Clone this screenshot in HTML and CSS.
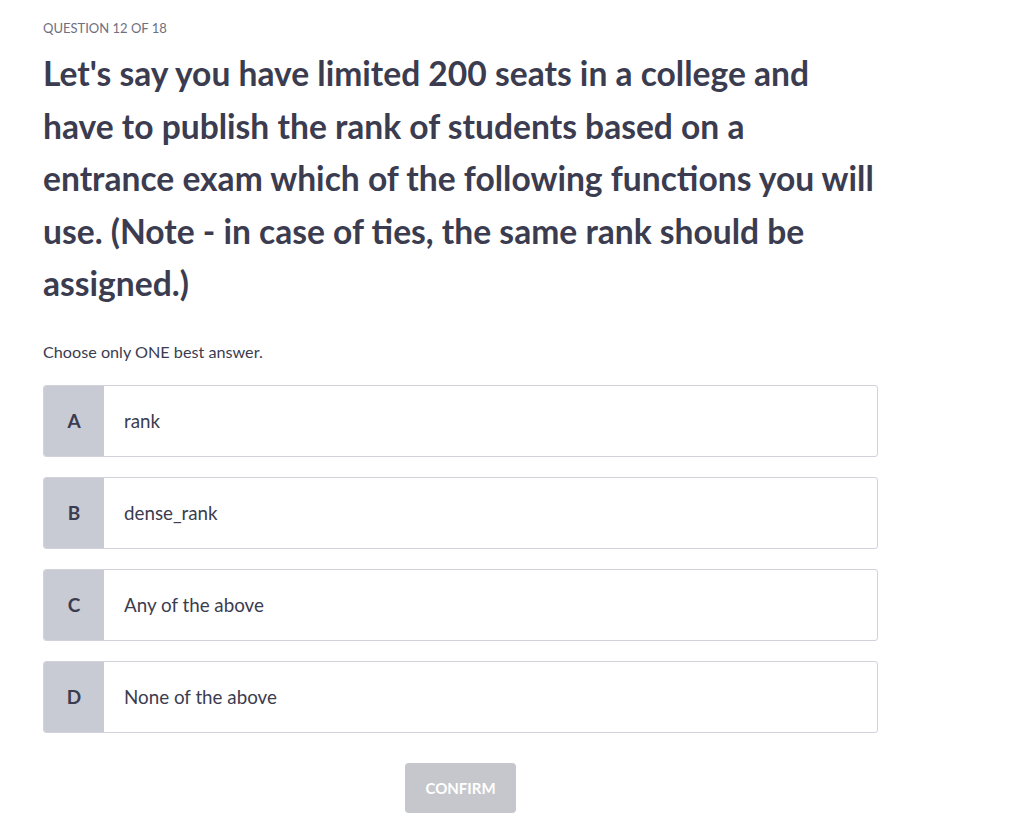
FILE: index.html
```html
<!DOCTYPE html>
<html>
<head>
<meta charset="utf-8">
<link rel="stylesheet" href="styles.css">
</head>
<body>
<main class="quiz">
  <div class="counter">QUESTION 12 OF 18</div>
  <h1 class="question">Let's say you have limited 200 seats in a college and have to publish the rank of students based on a entrance exam which of the following functions you will use. (Note - in case of ties, the same rank should be assigned.)</h1>
  <p class="hint">Choose only ONE best answer.</p>
  <div class="options">
    <div class="option"><span class="letter">A</span><span class="label">rank</span></div>
    <div class="option"><span class="letter">B</span><span class="label">dense_rank</span></div>
    <div class="option"><span class="letter">C</span><span class="label">Any of the above</span></div>
    <div class="option"><span class="letter">D</span><span class="label">None of the above</span></div>
  </div>
  <div class="actions"><button class="confirm">CONFIRM</button></div>
</main>
</body>
</html>
```
FILE: styles.css
```css
html, body { margin: 0; padding: 0; background: #fff; }
body { font-family: "Lato", "Open Sans", sans-serif; color: #3b3c50; }
.quiz { padding: 19px 0 0 43px; width: 835px; }
.counter { font-size: 13px; color: #6e6f80; line-height: 18px; }
.question { font-size: 33.6px; font-weight: 700; line-height: 52.5px; margin: 10px 0 0 0; color: #3b3c50; }
.hint { font-size: 16.2px; margin: 32px 0 0 0; line-height: 20px; color: #3b3c50; }
.options { display: flex; flex-direction: column; gap: 20px; margin-top: 23px; }
.option { display: flex; height: 72px; border: 1px solid #d2d2da; border-radius: 3px; box-sizing: border-box; overflow: hidden; }
.letter { width: 60px; background: #c9cbd4; display: flex; align-items: center; justify-content: center; font-weight: 700; font-size: 19px; color: #3b3c50; }
.label { display: flex; align-items: center; padding-left: 20px; font-size: 18.8px; color: #3b3c50; }
.actions { display: flex; justify-content: center; margin-top: 30px; }
.confirm { width: 111px; height: 50px; border: none; border-radius: 4px; background: #c6c7cc; color: #fff; font-family: inherit; font-weight: 700; font-size: 15px; }
```
